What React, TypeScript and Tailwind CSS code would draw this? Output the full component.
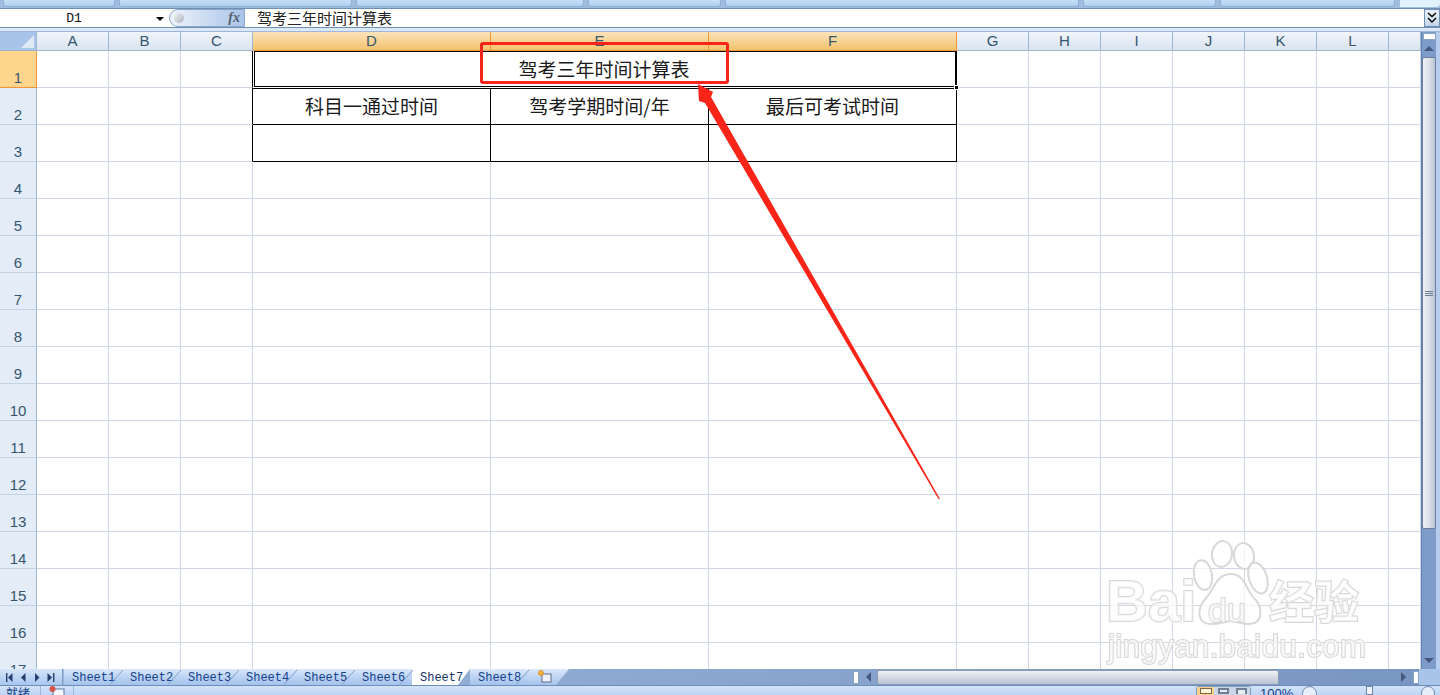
const cjk = "font-['Noto_Sans_CJK_SC','Noto_Sans',sans-serif]";

const columns = ["A", "B", "C", "D", "E", "F", "G", "H", "I", "J", "K", "L", ""];
const rows = Array.from({ length: 17 }, (_, i) => i + 1);
const sheets = ["Sheet1", "Sheet2", "Sheet3", "Sheet4", "Sheet5", "Sheet6", "Sheet7", "Sheet8"];
const ribbonPanels = ["w-[112px]", "w-[233px]", "w-[228px]", "w-[133px]", "w-[355px]", "w-[133px]", "w-[175px]"];

const Slash = ({ color = "#7f9fc9" }: { color?: string }) => (
  <svg className="absolute right-[-3px] top-0 z-10" width="16" height="16" viewBox="0 0 16 16">
    <path d="M1 15.5 L14 1" stroke={color} strokeWidth="1" fill="none" />
  </svg>
);

function RibbonEdge() {
  return (
    <div className="flex h-2 gap-1 bg-[#9fbddf] pl-[3px]">
      {ribbonPanels.map((w, i) => (
        <div key={i} className={`${w} h-[7px] rounded-b-[3px] border border-t-0 border-[#8fb0d6] bg-gradient-to-b from-[#c5dff5] to-[#add0ee]`} />
      ))}
      <div className="ml-px h-[7px] w-[40px] rounded-br-[4px] bg-[#e1f2ff]" />
    </div>
  );
}

function FormulaBar() {
  return (
    <div className="flex h-5 items-stretch border-y border-[#6f8fb5] bg-white">
      <div className="relative flex w-[169px] items-center justify-center pr-[21px] pt-[2px] font-['Liberation_Mono',monospace] text-[13px] text-[#111]">
        D1
        <span className="absolute right-[5px] top-[8px] h-0 w-0 border-x-[4px] border-t-[4px] border-x-transparent border-t-black" />
      </div>
      <div className="relative flex w-[76px] items-center justify-end rounded-l-full border-y border-l border-r border-[#8aa6c9] bg-gradient-to-r from-[#eef3fa] to-[#a9c4e8] pr-[4px]">
        <span className="absolute left-[4px] top-[3px] h-[10px] w-[10px] rounded-full bg-gradient-to-br from-[#f2f2f2] to-[#a9b4c0]" />
        <span className="font-['Liberation_Serif',serif] text-[14px] font-bold italic leading-none text-[#556070]">fx</span>
      </div>
      <div className={`${cjk} flex-1 pl-[12px] text-[15px] leading-[18px] text-[#222]`}>驾考三年时间计算表</div>
      <div className="flex w-[16px] flex-col items-center justify-center border border-[#6f8fb5] bg-gradient-to-b from-[#eef3fa] to-[#c4d5ea]">
        <svg width="10" height="12" viewBox="0 0 10 12" fill="none" stroke="#000" strokeWidth="1.4">
          <path d="M1 1 L5 4.5 L9 1" />
          <path d="M1 6 L5 10 L9 6" />
        </svg>
      </div>
    </div>
  );
}

function Sheet() {
  return (
    <div className="grid h-[637px] flex-1 grid-cols-[37px_72px_72px_72px_238px_218px_248px_72px_72px_72px_72px_72px_72px_32px] grid-rows-[19px_repeat(17,37px)] overflow-hidden bg-white font-['Liberation_Sans',sans-serif]">
      {/* corner */}
      <div className="flex items-end justify-end border-b border-r border-[#9eb6ce] bg-[#a9c4e9] p-[2px]">
        <svg width="13" height="13" viewBox="0 0 13 13"><path d="M13 0 V13 H0 Z" fill="#dfe9f6" /></svg>
      </div>
      {/* column headers */}
      {columns.map((c) => {
        const active = c === "D" || c === "E" || c === "F";
        return (
          <div
            key={c || "m"}
            className={
              active
                ? "flex items-center justify-center border-b border-r border-[#f29536] bg-gradient-to-b from-[#fbe3ba] to-[#f3c36c] text-[15px] text-[#35566f]"
                : "flex items-center justify-center border-b border-r border-[#9eb6ce] bg-gradient-to-b from-[#f1f5fb] to-[#d9e3f0] text-[15px] text-[#35566f]"
            }
          >
            {c}
          </div>
        );
      })}
      {rows.map((r) => (
        <Row key={r} r={r} />
      ))}
    </div>
  );
}

function Row({ r }: { r: number }) {
  const blank = (key: string, extra = "border-r-[#d0d7e5]") => (
    <div key={key} className={`border-b border-r border-b-[#d0d7e5] ${extra}`} />
  );
  const header = (
    <div
      className={
        r === 1
          ? "flex items-end justify-center border-b border-r border-[#f29536] bg-[#ffd58d] pb-px text-[15px] leading-[16px] text-[#35566f]"
          : "flex items-end justify-center border-b border-r border-b-[#c5d3e6] border-r-[#9eb6ce] bg-[#e4ecf7] pb-px text-[15px] leading-[16px] text-[#35566f]"
      }
    >
      {r}
    </div>
  );
  const left = ["A", "B", "C"].map((c) => blank(c + r, c === "C" && r <= 3 ? "border-r-black" : "border-r-[#d0d7e5]"));
  const right = ["G", "H", "I", "J", "K", "L", "M"].map((c) => blank(c + r));

  let middle;
  if (r === 1) {
    middle = (
      <div key="D1" className="relative col-span-3 pb-px pl-px pr-px">
        <div className={`${cjk} flex h-full items-center justify-center border-x border-t border-b border-black pr-[2px] text-[19px] text-[#1a1a1a]`}>
          驾考三年时间计算表
        </div>
        <div className="absolute right-0 top-0 h-full w-px bg-black" />
        <span className="absolute bottom-[-2px] right-[-2px] z-10 h-[5px] w-[5px] border border-white bg-black" />
      </div>
    );
  } else if (r === 2) {
    middle = ["科目一通过时间", "驾考学期时间/年", "最后可考试时间"].map((t) => (
      <div key={t} className={`${cjk} flex items-center justify-center border-y border-r border-black text-[19px] text-[#1a1a1a]`}>
        {t}
      </div>
    ));
  } else if (r === 3) {
    middle = ["D3", "E3", "F3"].map((k) => <div key={k} className="border-b border-r border-black" />);
  } else {
    middle = ["D", "E", "F"].map((c) => blank(c + r));
  }

  return (
    <>
      {header}
      {left}
      {middle}
      {right}
    </>
  );
}

function VerticalScroll() {
  return (
    <div className="flex w-[19px] flex-col bg-[#b6cdee]">
      <div className="flex h-full w-[15px] flex-col items-center border-l border-[#5f82b8] bg-[#7d9cc9]">
        <div className="mt-[1px] h-[7px] w-[13px] border border-[#8aa2c4] bg-white" />
        <span className="mt-[6px] h-0 w-0 border-x-[5px] border-b-[5px] border-x-transparent border-b-[#46587c]" />
        <div className="mt-[6px] flex h-[472px] w-[14px] items-center justify-center rounded-[2px] border border-[#6d7f9c] bg-gradient-to-r from-[#eef0f4] via-[#dde1e8] to-[#b9c4d4]">
          <div className="flex w-[8px] flex-col gap-px">
            <span className="h-px bg-[#6f7f96]" />
            <span className="h-px bg-[#6f7f96]" />
            <span className="h-px bg-[#6f7f96]" />
          </div>
        </div>
        <span className="mt-auto mb-[6px] h-0 w-0 border-x-[5px] border-t-[5px] border-x-transparent border-t-[#46587c]" />
      </div>
    </div>
  );
}

function NavArrow({ d }: { d: string }) {
  return (
    <svg width="8" height="9" viewBox="0 0 8 9" fill="#24406f">
      <path d={d} />
    </svg>
  );
}

function TabBar() {
  return (
    <div className="flex h-[17px] border-b border-[#6d8dbb] bg-gradient-to-r from-[#9db7dc] to-[#7896c2] font-['Liberation_Mono',monospace] text-[12px] text-[#15428b]">
      <div className="flex w-[63px] items-center gap-[6px] border-r border-[#7c9cc8] bg-gradient-to-b from-[#d6e5f9] to-[#a9c6ee] pl-[5px]">
        <NavArrow d="M1 0h1.4v9H1z M7.5 0v9L3 4.5z" />
        <NavArrow d="M6.5 0v9L2 4.5z" />
        <NavArrow d="M2 0v9l4.5-4.5z" />
        <NavArrow d="M6 0h1.4v9H6z M.5 0v9L5 4.5z" />
      </div>
      <div className="flex pl-[1px]">
        {sheets.map((s) => (
          <div
            key={s}
            className={
              s === "Sheet7"
                ? "relative z-[5] flex w-[58px] items-center bg-white pl-[8px] pt-[2px] leading-none text-[#15316a] [clip-path:polygon(0_0,100%_0,calc(100%-12px)_100%,0_100%)]"
                : "relative flex w-[58px] items-center bg-gradient-to-b from-[#dbe8fa] via-[#bcd3f3] to-[#a5c3ec] pl-[8px] pt-[2px] leading-none"
            }
          >
            {s}
            {s !== "Sheet7" && <Slash />}
          </div>
        ))}
        <div className="relative flex w-[41px] items-center bg-gradient-to-b from-[#dbe8fa] to-[#a5c3ec] pl-[9px] [clip-path:polygon(0_0,100%_0,calc(100%-13px)_100%,0_100%)]">
          <svg width="16" height="14" viewBox="0 0 16 14">
            <rect x="5" y="4" width="9" height="8" fill="#eef2f8" stroke="#5d6f8a" />
            <circle cx="4" cy="3" r="2.6" fill="#f3b23c" stroke="#c77a15" strokeWidth="0.6" />
          </svg>
        </div>
      </div>
      <div className="flex-1" />
      <div className="flex w-[566px] items-center">
        <span className="h-[13px] w-[6px] border border-[#8aa2c4] bg-white" />
        <span className="ml-[7px] h-0 w-0 border-y-[5px] border-r-[5px] border-y-transparent border-r-[#46587c]" />
        <div className="ml-[6px] h-[15px] w-[402px] rounded-[2px] border border-[#8a9ab2] bg-gradient-to-b from-[#f0f2f6] to-[#b8c3d2]" />
        <span className="ml-[122px] h-0 w-0 border-y-[5px] border-l-[5px] border-y-transparent border-l-[#46587c]" />
        <span className="ml-[7px] h-[13px] w-[6px] border border-[#8aa2c4] bg-white" />
      </div>
      <div className="w-[21px] bg-[#a9c4e9]" />
    </div>
  );
}

function StatusBar() {
  return (
    <div className={`${cjk} flex h-[9px] items-start overflow-hidden bg-gradient-to-b from-[#d3e3f9] to-[#bed5f5] text-[12px] leading-[14px] text-[#15428b]`}>
      <div className="w-[40px] pl-[6px]">就绪</div>
      <div className="flex w-[34px] justify-center border-x border-[#9db7dc]">
        <svg width="16" height="9" viewBox="0 0 16 9">
          <rect x="4" y="3" width="11" height="7" fill="#f3f6fb" stroke="#5d78a3" />
          <circle cx="3.5" cy="3" r="3" fill="#d9534a" />
        </svg>
      </div>
      <div className="ml-auto flex w-[244px] items-start pr-[5px]">
        <div className="flex h-[9px] w-[55px] gap-px rounded-t-[3px] border border-b-0 border-[#7f9bc4]">
          <span className="flex w-[18px] justify-center bg-[#f8d28b] pt-px">
            <span className="h-[6px] w-[12px] border border-[#7a6a48] bg-[#fff3d8]" />
          </span>
          <span className="flex w-[18px] justify-center bg-[#ccd6e3] pt-px">
            <span className="h-[6px] w-[11px] border-2 border-[#6f7f96] bg-[#e8edf4]" />
          </span>
          <span className="flex w-[17px] justify-center bg-[#ccd6e3] pt-px">
            <span className="h-[6px] w-[11px] border-x-2 border-t-2 border-[#6f7f96] bg-[#e8edf4]" />
          </span>
        </div>
        <span className="ml-[9px] font-['Liberation_Sans',sans-serif] text-[13px] leading-[16px]">100%</span>
        <span className="ml-[9px] h-[15px] w-[15px] rounded-full border border-[#6d87ad] bg-[#e6eef9]" />
        <span className="ml-[49px] h-[9px] w-[7px] border border-[#6d87ad] bg-[#f1f5fb]" />
        <span className="ml-[48px] h-[15px] w-[15px] rounded-full border border-[#6d87ad] bg-[#e6eef9]" />
      </div>
    </div>
  );
}

function Annotation() {
  return (
    <>
      <div className="absolute left-[480px] top-[42px] h-[42px] w-[249px] rounded-[3px] border-[3px] border-[#fa2418]" />
      <svg className="absolute left-0 top-0" width="1440" height="695">
        <polygon points="698,84 713,92 711,97 940,499 938.5,499 705,103 699,101" fill="#fa2418" />
      </svg>
    </>
  );
}

function Watermark() {
  const outline = "absolute font-['Liberation_Sans',sans-serif] font-bold leading-none text-white/70 [-webkit-text-stroke:2px_#d8d8d8] [paint-order:stroke_fill] blur-[0.4px]";
  return (
    <>
      <svg className="absolute left-0 top-0 blur-[0.4px]" width="1440" height="695" fill="rgba(255,255,255,0.7)" stroke="#d8d8d8" strokeWidth="2">
        <ellipse cx="1203" cy="575" rx="9" ry="15" transform="rotate(-10 1203 575)" />
        <ellipse cx="1222" cy="554" rx="10" ry="13" transform="rotate(8 1222 554)" />
        <ellipse cx="1244" cy="556" rx="10" ry="13" transform="rotate(-8 1244 556)" />
        <ellipse cx="1258" cy="578" rx="9" ry="16" transform="rotate(-18 1258 578)" />
        <path d="M1231 574 C1245 574 1246 590 1254 598 C1262 606 1265 624 1248 624 C1240 624 1236 621 1231 621 C1226 621 1220 624 1211 624 C1196 624 1197 608 1206 598 C1214 590 1216 574 1231 574 Z" />
      </svg>
      <span className={`${outline} left-[1106px] top-[572px] text-[58px]`}>Bai</span>
      <span className={`${outline} left-[1208px] top-[593px] text-[34px] font-normal`}>du</span>
      <span className={`${cjk} absolute left-[1269px] top-[570px] text-[45px] font-bold leading-[60px] text-white/70 [-webkit-text-stroke:2px_#d8d8d8] [paint-order:stroke_fill] blur-[0.4px]`}>经验</span>
      <span className={`${outline} left-[1108px] top-[631px] text-[31px] font-normal tracking-[0.5px]`}>jingyan.baidu.com</span>
    </>
  );
}

export default function App() {
  return (
    <div className="relative flex h-[695px] w-[1440px] flex-col overflow-hidden bg-[#c5daf5]">
      <RibbonEdge />
      <FormulaBar />
      <div className="h-[4px] border-b border-[#9db7dc] bg-[#dde8f6]" />
      <div className="flex">
        <Sheet />
        <VerticalScroll />
      </div>
      <TabBar />
      <StatusBar />
      <Watermark />
      <Annotation />
    </div>
  );
}
